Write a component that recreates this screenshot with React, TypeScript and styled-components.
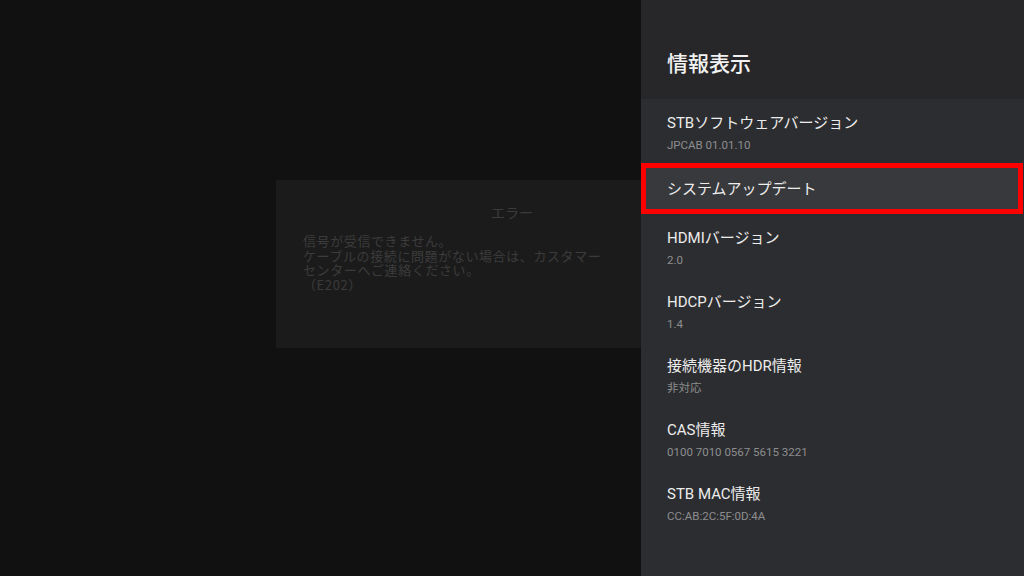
import React from "react";
import styled, { createGlobalStyle } from "styled-components";

const GlobalStyle = createGlobalStyle`
  html, body {
    margin: 0;
    padding: 0;
    background: #111112;
    font-family: Roboto, "Noto Sans CJK JP", sans-serif;
  }
  * {
    box-sizing: border-box;
  }
`;

const Screen = styled.div`
  position: relative;
  width: 1024px;
  height: 576px;
  overflow: hidden;
  background: #111112;
  display: flex;
  align-items: flex-start;
  justify-content: center;
  padding-top: 180px;
`;

const ErrorDialog = styled.div`
  width: 472px;
  height: 168px;
  background: #1b1b1b;
  padding: 22px 27px 0;
  font-family: "Noto Sans CJK JP", sans-serif;
  color: #3b3b3b;
`;

const DialogTitle = styled.div`
  text-align: center;
  font-size: 14px;
  line-height: 20px;
  margin-bottom: 12px;
`;

const DialogBody = styled.div`
  font-size: 13px;
  letter-spacing: 0.6px;
  line-height: 14.5px;
  white-space: nowrap;
`;

const Panel = styled.aside`
  position: absolute;
  top: 0;
  right: 0;
  width: 383px;
  height: 576px;
  background: #2c2d30;
  display: flex;
  flex-direction: column;
`;

const PanelHeader = styled.div`
  height: 99px;
  background: #27272a;
  padding: 48px 26px 0;
`;

const PanelTitle = styled.h1`
  margin: 0;
  font-family: "Noto Sans CJK JP", sans-serif;
  font-size: 21px;
  line-height: 28px;
  font-weight: 500;
  color: #f2f2f2;
`;

const ItemList = styled.div`
  display: flex;
  flex-direction: column;
`;

const Item = styled.div<{ $focused?: boolean; $single?: boolean }>`
  height: ${(p) => (p.$single ? "51px" : "64px")};
  padding: ${(p) => (p.$single ? "0 21px" : "14px 26px 0")};
  display: flex;
  flex-direction: column;
  justify-content: ${(p) => (p.$single ? "center" : "flex-start")};
  background: ${(p) => (p.$focused ? "#38393c" : "transparent")};
  border: ${(p) => (p.$focused ? "5px solid #ff0000" : "none")};
  margin-right: ${(p) => (p.$focused ? "1px" : "0")};
`;

const ItemTitle = styled.div`
  font-size: 15px;
  line-height: 20px;
  color: #ececec;
  white-space: nowrap;
`;

const ItemValue = styled.div`
  margin-top: 4px;
  font-size: 11.5px;
  line-height: 16px;
  color: #8d8d8f;
  white-space: nowrap;
`;

const items = [
  { title: "STBソフトウェアバージョン", value: "JPCAB 01.01.10" },
  { title: "システムアップデート", focused: true },
  { title: "HDMIバージョン", value: "2.0" },
  { title: "HDCPバージョン", value: "1.4" },
  { title: "接続機器のHDR情報", value: "非対応" },
  { title: "CAS情報", value: "0100 7010 0567 5615 3221" },
  { title: "STB MAC情報", value: "CC:AB:2C:5F:0D:4A" },
];

const App = () => {
  return (
    <>
      <GlobalStyle />
      <Screen>
        <ErrorDialog>
          <DialogTitle>エラー</DialogTitle>
          <DialogBody>
            信号が受信できません。
            <br />
            ケーブルの接続に問題がない場合は、カスタマー
            <br />
            センターへご連絡ください。
            <br />
            （E202）
          </DialogBody>
        </ErrorDialog>
        <Panel>
          <PanelHeader>
            <PanelTitle>情報表示</PanelTitle>
          </PanelHeader>
          <ItemList>
            {items.map((item) => (
              <Item
                key={item.title}
                $focused={item.focused}
                $single={!item.value}
              >
                <ItemTitle>{item.title}</ItemTitle>
                {item.value && <ItemValue>{item.value}</ItemValue>}
              </Item>
            ))}
          </ItemList>
        </Panel>
      </Screen>
    </>
  );
};

export default App;
